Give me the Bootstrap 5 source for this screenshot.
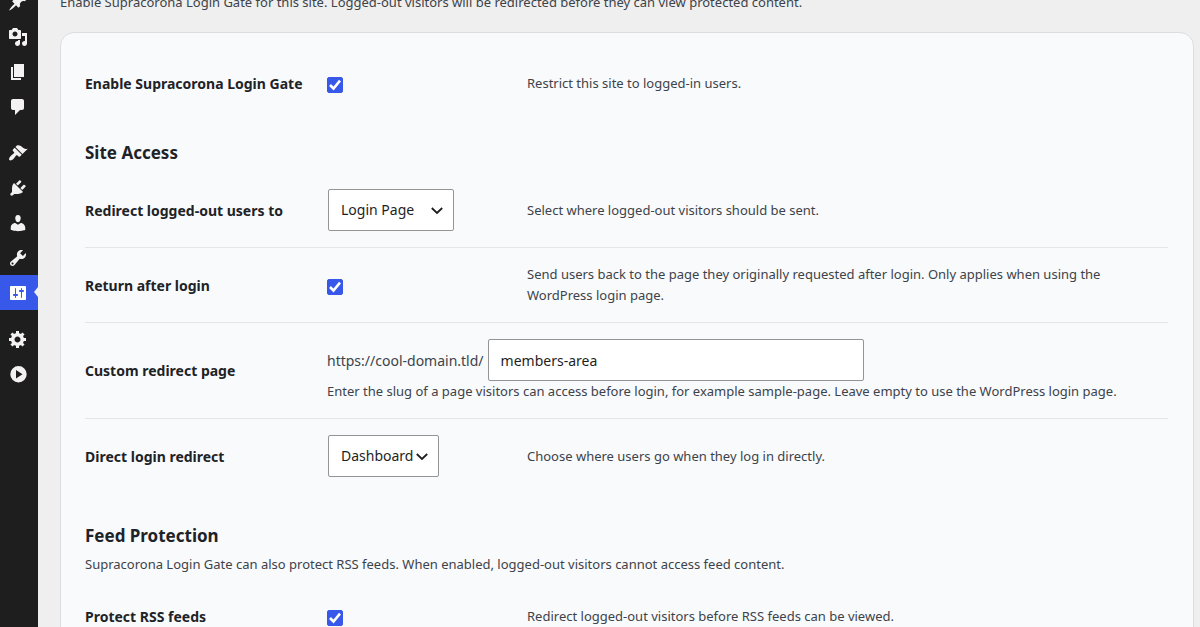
<!DOCTYPE html>
<html lang="en">
<head>
<meta charset="utf-8">
<meta name="viewport" content="width=device-width, initial-scale=1">
<title>Supracorona Login Gate</title>
<link href="https://cdn.jsdelivr.net/npm/bootstrap@5.3.0/dist/css/bootstrap.min.css" rel="stylesheet">
<style>
  :root { --accent: #3858e9; --ink: #1d2327; --soft: #3c434a; }
  body { background: #efefef; color: var(--soft); font: 13px/21px "Noto Sans", sans-serif; }
  .shell { height: 100vh; }
  .side { width: 38px; background: #1e1e1e; }
  .side ul { margin-top: -16px; }
  .side a { height: 35px; color: #f3f1f1; padding-left: 8px; }
  .side svg { width: 20px; height: 20px; fill: currentColor; }
  .side .gap-above { margin-top: 11px; }
  .side a.active { background: var(--accent); color: #fff; }
  .side a.active::after { content: ""; position: absolute; right: 0; top: 12px; border: 5px solid transparent; border-left: 0; border-right: 4px solid #efefef; }
  .main-area { padding: 0 6px 0 22px; }
  .intro { margin: -8px 0 19px; }
  .panel { background: #f9fafc; border: 1px solid #dcdde0; border-radius: 14px; padding: 24px 25px 40px 24px; }
  .panel h2 { font-size: 17px; line-height: 24px; font-weight: 700; color: var(--ink); margin: 0; }
  .setting { display: grid; grid-template-columns: 242px 200px minmax(0, 1fr); align-items: center; padding: 16px 0; }
  .setting + .setting { border-top: 1px solid #e3e5e8; }
  .setting .title { font-size: 14px; font-weight: 700; color: var(--ink); }
  .setting .wide { grid-column: 2 / -1; }
  .prefix { font-size: 14px; }
  .site-head { padding: 31px 0 8px; }
  .feed-head { padding: 31px 0 15px; }
  .feed-head p { margin: 6px 0 0; }
  .panel .form-check-input { width: 16px; height: 16px; margin: 3px 0 0; border-radius: 2px; display: block; }
  .panel .form-check-input:checked { background-color: var(--accent); border-color: var(--accent); background-size: 16px 16px;
    background-image: url("data:image/svg+xml,%3Csvg xmlns='http://www.w3.org/2000/svg' viewBox='0 0 16 16'%3E%3Cpath fill='none' stroke='%23fff' stroke-width='2.6' d='M3 8l3.500 3.500L13 3.600'/%3E%3C/svg%3E"); }
  .panel .field { height: 42px; border: 1px solid #949494; border-radius: 2px; background-color: #fff; color: #1e1e1e; font-size: 14px; line-height: 20px; padding: 0 12px; }
  .form-select.field { margin-left: 1px; background-size: 16px 16px; background-position: right 8px center;
    background-image: url("data:image/svg+xml,%3Csvg xmlns='http://www.w3.org/2000/svg' viewBox='0 0 16 16'%3E%3Cpath fill='none' stroke='%231e1e1e' stroke-width='1.8' d='M2.8 6l5.2 5 5.2-5'/%3E%3C/svg%3E"); }
  .w-login { width: 126px; }
  .w-dash { width: 111px; }
  .slug { width: 376px; max-width: 100%; }
</style>
</head>
<body>
<div class="shell d-flex overflow-hidden">
  <nav class="side flex-shrink-0" aria-label="Admin menu">
    <ul class="list-unstyled mb-0">
      <li><a href="#" class="d-flex align-items-center position-relative" aria-label="Posts"><svg viewBox="0 0 20 20"><path d="M10.44 3.02l1.82-1.82 6.36 6.35-1.83 1.82c-1.05-.68-2.48-.57-3.41.36l-.75.75c-.92.93-1.04 2.35-.35 3.41l-1.83 1.82-2.41-2.41-2.8 2.79c-.42.42-3.38 2.71-3.8 2.29s1.86-3.39 2.28-3.81l2.79-2.79L4.1 9.36l1.83-1.82c1.05.69 2.48.57 3.4-.36l.75-.75c.93-.92 1.05-2.35.36-3.41z"/></svg></a></li>
      <li><a href="#" class="d-flex align-items-center position-relative" aria-label="Media"><svg viewBox="0 0 20 20"><path d="M13 11V4c0-.55-.45-1-1-1h-1.67L9 1H5L3.67 3H2c-.55 0-1 .45-1 1v7c0 .55.45 1 1 1h10c.55 0 1-.45 1-1zM7 4.5c1.38 0 2.5 1.12 2.5 2.5S8.38 9.5 7 9.5 4.5 8.38 4.5 7 5.62 4.5 7 4.5zM14 6h5v10.5c0 1.38-1.12 2.5-2.5 2.5S14 17.88 14 16.5s1.12-2.5 2.5-2.5c.17 0 .34.02.5.05V9h-3V6zm-4 8.05V13h2v3.5c0 1.38-1.12 2.5-2.5 2.5S7 17.88 7 16.5 8.12 14 9.5 14c.17 0 .34.02.5.05z"/></svg></a></li>
      <li><a href="#" class="d-flex align-items-center position-relative" aria-label="Pages"><svg viewBox="0 0 20 20"><path d="M6 15V2h10v13H6zm-1 1h8v2H3V5h2v11z"/></svg></a></li>
      <li><a href="#" class="d-flex align-items-center position-relative" aria-label="Comments"><svg viewBox="0 0 20 20"><path d="M5 2h9c1.1 0 2 .9 2 2v7c0 1.1-.9 2-2 2h-2l-5 5v-5H5c-1.1 0-2-.9-2-2V4c0-1.1.9-2 2-2z"/></svg></a></li>
      <li class="gap-above"><a href="#" class="d-flex align-items-center position-relative" aria-label="Appearance"><svg viewBox="0 0 20 20"><path d="M14.48 11.06L7.41 3.99l1.5-1.5c.5-.56 2.3-.47 3.51.32 1.21.8 1.43 1.28 2.91 2.1 1.18.64 2.45 1.26 4.45.85zm-.71.71L6.7 4.7 4.93 6.47c-.39.39-.39 1.02 0 1.41l1.06 1.06c.39.39.39 1.03 0 1.42-.6.6-1.43 1.11-2.21 1.69-.35.26-.7.53-1.01.84C1.43 14.23.4 16.08 1.4 17.07c.99 1 2.84-.03 4.18-1.36.31-.31.58-.66.85-1.02.57-.78 1.08-1.61 1.69-2.21.39-.39 1.02-.39 1.41 0l1.06 1.06c.39.39 1.02.39 1.41 0z"/></svg></a></li>
      <li><a href="#" class="d-flex align-items-center position-relative" aria-label="Plugins"><svg viewBox="0 0 20 20"><path d="M13.11 4.36L9.87 7.6 8 5.73l3.24-3.24c.35-.34 1.05-.2 1.56.32.52.51.66 1.21.31 1.55zm-8 1.77l.91-1.12 9.01 9.01-1.19.84c-.71.71-2.63 1.16-3.82 1.16H6.14L4.9 17.26c-.59.59-1.54.59-2.12 0-.59-.58-.59-1.53 0-2.12l1.24-1.24v-3.88c0-1.13.4-3.19 1.09-3.89zm7.26 3.97l3.24-3.24c.34-.35 1.04-.21 1.55.31.52.51.66 1.21.31 1.55l-3.24 3.25z"/></svg></a></li>
      <li><a href="#" class="d-flex align-items-center position-relative" aria-label="Users"><svg viewBox="0 0 20 20"><path d="M10 9.25c-2.27 0-2.73-3.44-2.73-3.44C7 4.02 7.82 2 9.97 2c2.16 0 2.98 2.02 2.71 3.81 0 0-.41 3.44-2.68 3.44zm0 2.57L12.72 10c2.39 0 4.52 2.33 4.52 4.53v2.49s-3.65 1.13-7.24 1.13c-3.65 0-7.24-1.13-7.24-1.13v-2.49c0-2.25 1.94-4.48 4.47-4.48z"/></svg></a></li>
      <li><a href="#" class="d-flex align-items-center position-relative" aria-label="Tools"><svg viewBox="0 0 20 20"><path d="M16.68 9.77c-1.34 1.34-3.3 1.67-4.95.99l-5.41 6.52c-.99.99-2.59.99-3.58 0s-.99-2.59 0-3.57l6.52-5.42c-.68-1.65-.35-3.61.99-4.95 1.28-1.28 3.12-1.62 4.72-1.06l-2.89 2.89 2.82 2.82 2.86-2.87c.53 1.58.18 3.39-1.08 4.65zM3.81 16.21c.4.39 1.04.39 1.43 0 .4-.4.4-1.04 0-1.43-.39-.4-1.03-.4-1.43 0-.39.39-.39 1.03 0 1.43z"/></svg></a></li>
      <li><a href="#" class="active d-flex align-items-center position-relative" aria-current="page" aria-label="Settings"><svg viewBox="0 0 20 20"><path d="M18 16V4c0-.55-.45-1-1-1H3c-.55 0-1 .45-1 1v12c0 .55.45 1 1 1h14c.55 0 1-.45 1-1zM8 11h1c.55 0 1 .45 1 1s-.45 1-1 1H8v1.5c0 .28-.22.5-.5.5s-.5-.22-.5-.5V13H6c-.55 0-1-.45-1-1s.45-1 1-1h1V5.5c0-.28.22-.5.5-.5s.5.22.5.5V11zm5-2h-1c-.55 0-1-.45-1-1s.45-1 1-1h1V5.5c0-.28.22-.5.5-.5s.5.22.5.5V7h1c.55 0 1 .45 1 1s-.45 1-1 1h-1v5.5c0 .28-.22.5-.5.5s-.5-.22-.5-.5V9z"/></svg></a></li>
      <li class="gap-above"><a href="#" class="d-flex align-items-center position-relative" aria-label="Options"><svg viewBox="0 0 20 20"><path d="M18 12h-2.18c-.17.7-.44 1.35-.81 1.93l1.54 1.54-2.1 2.1-1.54-1.54c-.58.36-1.23.63-1.91.79V19H8v-2.18c-.68-.16-1.33-.43-1.91-.79l-1.54 1.54-2.12-2.12 1.54-1.54c-.36-.58-.63-1.23-.79-1.91H1V9.03h2.17c.16-.7.44-1.35.8-1.94L2.43 5.55l2.1-2.1 1.54 1.54c.58-.37 1.24-.64 1.93-.81V2h3v2.18c.68.16 1.33.43 1.91.79l1.54-1.54 2.12 2.12-1.54 1.54c.36.59.64 1.24.8 1.94H18V12zm-8.5 1.5c1.66 0 3-1.34 3-3s-1.34-3-3-3-3 1.34-3 3 1.34 3 3 3z"/></svg></a></li>
      <li><a href="#" class="d-flex align-items-center position-relative" aria-label="Expand menu"><svg viewBox="0 0 20 20"><path fill-rule="evenodd" d="M10.5 2a8.2 8.2 0 1 0 0 16.400a8.200 8.200 0 1 0 0-16.400zM8 6v8.500l6.500-4.250z"/></svg></a></li>
    </ul>
  </nav>

  <main class="main-area flex-grow-1">
    <p class="intro">Enable Supracorona Login Gate for this site. Logged-out visitors will be redirected before they can view protected content.</p>
    <form class="panel">
      <div class="setting">
        <label class="title" for="enable">Enable Supracorona Login Gate</label>
        <input class="form-check-input" type="checkbox" id="enable" checked>
        <span>Restrict this site to logged-in users.</span>
      </div>

      <div class="site-head"><h2>Site Access</h2></div>
      <div class="setting">
        <label class="title" for="target">Redirect logged-out users to</label>
        <div><select class="form-select field w-login" id="target"><option>Login Page</option><option>Custom Page</option></select></div>
        <span>Select where logged-out visitors should be sent.</span>
      </div>
      <div class="setting">
        <label class="title" for="return">Return after login</label>
        <input class="form-check-input" type="checkbox" id="return" checked>
        <span>Send users back to the page they originally requested after login. Only applies when using the WordPress login page.</span>
      </div>
      <div class="setting">
        <label class="title" for="slug">Custom redirect page</label>
        <div class="wide">
          <div class="d-flex align-items-center gap-1"><span class="prefix">https://cool-domain.tld/</span><input class="form-control field slug" type="text" id="slug" value="members-area"></div>
          <div>Enter the slug of a page visitors can access before login, for example sample-page. Leave empty to use the WordPress login page.</div>
        </div>
      </div>
      <div class="setting">
        <label class="title" for="direct">Direct login redirect</label>
        <div><select class="form-select field w-dash" id="direct"><option>Dashboard</option><option>Home</option></select></div>
        <span>Choose where users go when they log in directly.</span>
      </div>

      <div class="feed-head">
        <h2>Feed Protection</h2>
        <p>Supracorona Login Gate can also protect RSS feeds. When enabled, logged-out visitors cannot access feed content.</p>
      </div>
      <div class="setting">
        <label class="title" for="rss">Protect RSS feeds</label>
        <input class="form-check-input" type="checkbox" id="rss" checked>
        <span>Redirect logged-out visitors before RSS feeds can be viewed.</span>
      </div>
    </form>
  </main>
</div>
<script src="https://cdn.jsdelivr.net/npm/bootstrap@5.3.0/dist/js/bootstrap.bundle.min.js"></script>
</body>
</html>
